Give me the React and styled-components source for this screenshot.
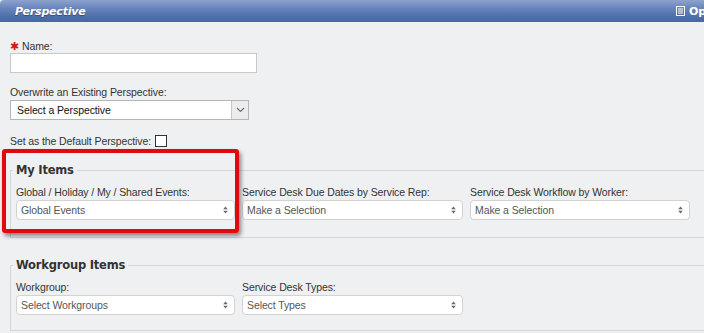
import React from "react";
import styled, { createGlobalStyle } from "styled-components";

const Global = createGlobalStyle`
  html, body { margin: 0; padding: 0; background: #eff0f2; overflow: hidden; }
  body { font-family: "Liberation Sans", Arial, sans-serif; font-size: 10.5px; color: #333; }
`;

const Page = styled.div`
  position: relative;
  width: 760px;
  height: 333px;
  background: #eff0f2;
`;

const Header = styled.div`
  height: 22px;
  box-sizing: border-box;
  border-radius: 4px 4px 0 0;
  background: linear-gradient(#8ea3cd 0%, #6b86bd 35%, #4f6eab 75%, #4866a5 100%);
  display: flex;
  align-items: center;
  justify-content: space-between;
  padding: 0 0 0 15px;
  color: #fff;
`;

const Title = styled.div`
  font-family: "DejaVu Sans", Verdana, sans-serif;
  font-weight: bold;
  font-style: italic;
  font-size: 11px;
  letter-spacing: -0.2px;
  text-shadow: 0 1px 1px rgba(0, 0, 0, 0.35);
`;

const HeaderAction = styled.div`
  display: flex;
  align-items: center;
  gap: 4px;
  width: 84px;
  font-family: "DejaVu Sans", Verdana, sans-serif;
  font-weight: bold;
  font-size: 11px;
`;

const Body = styled.div`
  padding: 17px 0 0 10px;
  display: flex;
  flex-direction: column;
`;

const Label = styled.div`
  line-height: 14px;
  height: 14px;
  white-space: nowrap;
  color: #333;
  letter-spacing: -0.1px;
`;

const Req = styled.span`
  color: #d01818;
  font-size: 11px;
  margin-right: 3px;
`;

const TextInput = styled.div`
  width: 247px;
  height: 20px;
  box-sizing: border-box;
  background: #fff;
  border: 1px solid #c9c9c9;
`;

const Gap = styled.div`
  height: ${(p) => p.$h}px;
`;

const WinSelect = styled.div`
  width: 239px;
  height: 20px;
  box-sizing: border-box;
  background: #fff;
  border: 1px solid #b5b5b5;
  display: flex;
  align-items: stretch;
  margin-top: 1px;
`;

const WinText = styled.div`
  flex: 1;
  padding-left: 6px;
  line-height: 18px;
  color: #111;
  letter-spacing: -0.1px;
`;

const WinButton = styled.div`
  width: 16px;
  border-left: 1px solid #c7c7c7;
  background: #ececec;
  display: flex;
  align-items: center;
  justify-content: center;
`;

const CheckRow = styled.div`
  display: flex;
  align-items: center;
  gap: 4px;
  height: 14px;
  letter-spacing: -0.1px;
`;

const CheckBox = styled.div`
  width: 12px;
  height: 12px;
  box-sizing: border-box;
  border: 1px solid #333;
  background: #fff;
`;

const Fieldset = styled.fieldset`
  margin: ${(p) => p.$mt}px 0 0 0;
  padding: 7px 0 ${(p) => p.$pb}px 5px;
  border: 1px solid #d6d6d6;
  border-right: none;
  min-width: 0;
`;

const Legend = styled.legend`
  font-family: "DejaVu Sans", Verdana, sans-serif;
  font-weight: bold;
  font-size: 11.5px;
  line-height: 16px;
  color: #333;
  padding: 0 3px;
  margin-left: -3px;
  letter-spacing: -0.2px;
`;

const Row = styled.div`
  display: grid;
  grid-template-columns: 219px 221px 220px;
  column-gap: 7px;
`;

const Field = styled.div`
  display: flex;
  flex-direction: column;
  gap: 1px;
`;

const SelectBox = styled.div`
  height: 20px;
  box-sizing: border-box;
  background: #fff;
  border: 1px solid #d2d2d2;
  border-radius: 4px;
  display: flex;
  align-items: center;
  justify-content: space-between;
  padding: 0 6px 0 4px;
  color: #555;
  letter-spacing: -0.1px;
  white-space: nowrap;
`;

const Highlight = styled.div`
  position: absolute;
  left: 2px;
  top: 149px;
  width: 237px;
  height: 84px;
  box-sizing: border-box;
  border: 4px solid #e3080c;
  border-radius: 3px;
  box-shadow: 2px 3px 4px rgba(0, 0, 0, 0.45);
  pointer-events: none;
`;

const UpDown = () => (
  <svg width="5" height="8" viewBox="0 0 5 8">
    <path d="M2.5 0.5 L4.8 3.2 H0.2 Z" fill="#6a6a6a" />
    <path d="M2.5 7.5 L4.8 4.8 H0.2 Z" fill="#6a6a6a" />
  </svg>
);

const Chevron = () => (
  <svg width="9" height="6" viewBox="0 0 9 6">
    <path d="M1 1 L4.5 4.5 L8 1" stroke="#707070" strokeWidth="1.2" fill="none" />
  </svg>
);

const ListIcon = () => (
  <svg width="9" height="10" viewBox="0 0 9 10">
    <rect x="0.5" y="0.5" width="8" height="9" fill="none" stroke="#fff" strokeWidth="1" />
    <path d="M2 3 H7 M2 5 H7 M2 7 H7" stroke="#fff" strokeWidth="1" />
  </svg>
);

const SelectField = ({ label, value }) => (
  <Field>
    <Label>{label}</Label>
    <SelectBox>
      <span>{value}</span>
      <UpDown />
    </SelectBox>
  </Field>
);

export default function App() {
  return (
    <>
      <Global />
      <Page>
        <Header>
          <Title>Perspective</Title>
          <HeaderAction>
            <ListIcon />
            <span>Options</span>
          </HeaderAction>
        </Header>
        <Body>
          <Label>
            <Req>✱</Req>Name:
          </Label>
          <TextInput />
          <Gap $h={12} />
          <Label>Overwrite an Existing Perspective:</Label>
          <WinSelect>
            <WinText>Select a Perspective</WinText>
            <WinButton>
              <Chevron />
            </WinButton>
          </WinSelect>
          <Gap $h={14} />
          <CheckRow>
            <span>Set as the Default Perspective:</span>
            <CheckBox />
          </CheckRow>
          <Fieldset $mt={14} $pb={17}>
            <Legend>My Items</Legend>
            <Row>
              <SelectField label="Global / Holiday / My / Shared Events:" value="Global Events" />
              <SelectField label="Service Desk Due Dates by Service Rep:" value="Make a Selection" />
              <SelectField label="Service Desk Workflow by Worker:" value="Make a Selection" />
            </Row>
          </Fieldset>
          <Fieldset $mt={19} $pb={15}>
            <Legend>Workgroup Items</Legend>
            <Row>
              <SelectField label="Workgroup:" value="Select Workgroups" />
              <SelectField label="Service Desk Types:" value="Select Types" />
            </Row>
          </Fieldset>
        </Body>
        <Highlight />
      </Page>
    </>
  );
}
